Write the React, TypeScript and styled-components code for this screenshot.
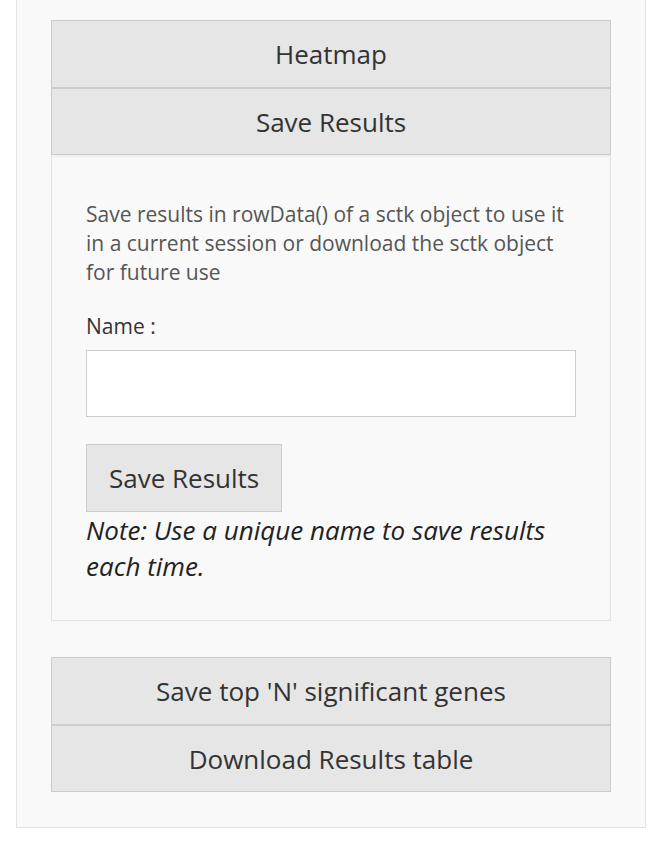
import React, { useState } from 'react';
import styled, { createGlobalStyle } from 'styled-components';

const GlobalStyle = createGlobalStyle`
  body {
    margin: 0;
    background: #ffffff;
    font-family: "Open Sans", "Liberation Sans", sans-serif;
    color: #333333;
  }
`;

const Well = styled.div`
  margin: -1px 16px 0 16px;
  padding: 20px 34px 35px;
  background: #f9f9f9;
  border: 1px solid #e3e3e3;
`;

const Group = styled.div`
  display: flex;
  flex-direction: column;
  & + & {
    margin-top: 36px;
  }
`;

const Header = styled.button`
  height: 68px;
  width: 100%;
  background: #e6e6e6;
  border: 1px solid #cccccc;
  font-family: "Open Sans", "Liberation Sans", sans-serif;
  font-size: 26px;
  color: #333333;
  cursor: pointer;
  & + & {
    margin-top: -1px;
    border-top: 2px solid #cccccc;
  }
`;

const Body = styled.div`
  background: #f9f9f9;
  border: 1px solid #e3e3e3;
  border-top: none;
  box-shadow: inset 0 2px 2px rgba(0, 0, 0, 0.04);
  padding: 45px 34px 36px;
`;

const Intro = styled.p`
  margin: 0 0 25px;
  font-size: 21px;
  line-height: 29px;
  color: #555555;
`;

const Label = styled.label`
  display: block;
  font-size: 21px;
  line-height: 29px;
  color: #333333;
  margin-bottom: 9px;
`;

const NameInput = styled.input`
  display: block;
  box-sizing: border-box;
  width: 490px;
  height: 67px;
  border: 1px solid #cccccc;
  background: #ffffff;
  font-family: inherit;
  font-size: 21px;
  padding: 0 12px;
`;

const SaveButton = styled.button`
  margin-top: 27px;
  height: 68px;
  padding: 0 22px;
  background: #e6e6e6;
  border: 1px solid #cccccc;
  font-family: "Open Sans", "Liberation Sans", sans-serif;
  font-size: 26px;
  color: #333333;
  cursor: pointer;
`;

const Note = styled.p`
  margin: 0;
  font-size: 26px;
  line-height: 36px;
  font-style: italic;
  color: #222222;
`;

export default function App() {
  const [name, setName] = useState('');

  return (
    <>
      <GlobalStyle />
      <Well>
        <Group>
          <Header>Heatmap</Header>
          <Header>Save Results</Header>
          <Body>
            <Intro>
              Save results in rowData() of a sctk object to use it in a current session or download the sctk object for
              future use
            </Intro>
            <Label htmlFor="save-name">Name :</Label>
            <NameInput id="save-name" value={name} onChange={(e) => setName(e.target.value)} />
            <SaveButton>Save Results</SaveButton>
            <Note>Note: Use a unique name to save results each time.</Note>
          </Body>
        </Group>
        <Group>
          <Header>Save top 'N' significant genes</Header>
          <Header>Download Results table</Header>
        </Group>
      </Well>
    </>
  );
}
